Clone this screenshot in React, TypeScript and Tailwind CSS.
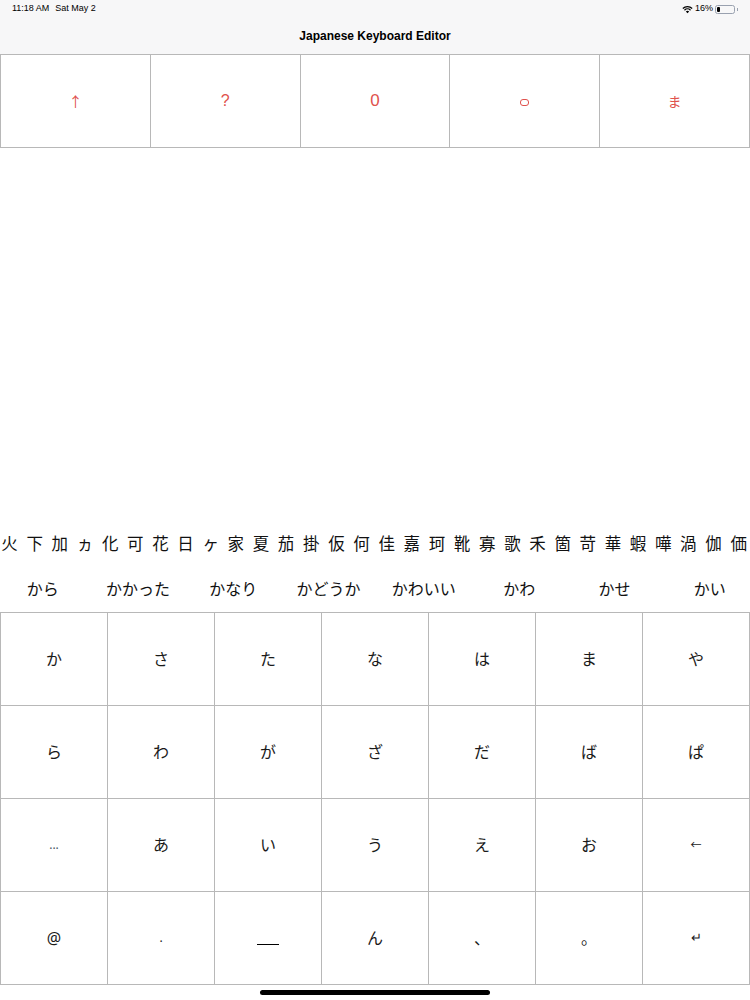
import React from "react";

const kanji = [
  "火", "下", "加", "ヵ", "化", "可", "花", "日", "ヶ", "家",
  "夏", "茄", "掛", "仮", "何", "佳", "嘉", "珂", "靴", "寡",
  "歌", "禾", "箇", "苛", "華", "蝦", "嘩", "渦", "伽", "価",
];

const candidates = ["から", "かかった", "かなり", "かどうか", "かわいい", "かわ", "かせ", "かい"];

const keys = [
  ["か", "さ", "た", "な", "は", "ま", "や"],
  ["ら", "わ", "が", "ざ", "だ", "ば", "ぱ"],
  ["…", "あ", "い", "う", "え", "お", "←"],
  ["@", ".", "__", "ん", "、", "。", "↵"],
];

const topKeys = ["↑", "?", "O", "o", "ま"];

const jp = { fontFamily: '"Noto Sans", "Noto Sans CJK JP", sans-serif' };

function Key({ label }: { label: string }) {
  let content: React.ReactNode = label;
  if (label === "__") {
    content = <span className="block w-[22px] h-px bg-black mt-3" />;
  } else if (label === "…") {
    content = <span className="text-[12px] text-gray-600">...</span>;
  } else if (label === ".") {
    content = <span className="text-[12px]">.</span>;
  } else if (label === "←") {
    content = <span className="text-[11px]">{label}</span>;
  } else if (label === "↵") {
    content = <span className="text-[13px]">{label}</span>;
  }
  return (
    <div className="flex items-center justify-center bg-white text-[16px] text-[#1a1a1a]">
      {content}
    </div>
  );
}

export default function App() {
  return (
    <div className="h-[1000px] w-[750px] flex flex-col bg-white overflow-hidden" style={jp}>
      {/* Status + nav bar */}
      <div className="h-[54px] bg-[#f7f7f8] flex flex-col" style={{ fontFamily: '"Liberation Sans", sans-serif' }}>
        <div className="h-[18px] flex items-center justify-between px-[12px] text-[9px] text-black">
          <div className="flex gap-[6px]">
            <span>11:18 AM</span>
            <span>Sat May 2</span>
          </div>
          <div className="flex items-center gap-[2px]">
            <svg width="11" height="9" viewBox="0 0 16 12">
              <path d="M8 11.5 L5.6 9 A3.4 3.4 0 0 1 10.4 9 Z" fill="black" />
              <path d="M3.6 7 A6.3 6.3 0 0 1 12.4 7" stroke="black" strokeWidth="1.8" fill="none" />
              <path d="M1.2 4.6 A9.8 9.8 0 0 1 14.8 4.6" stroke="black" strokeWidth="1.8" fill="none" />
            </svg>
            <span>16%</span>
            <div className="w-[20px] h-[9px] rounded-[2.5px] border border-gray-400 p-[1px] flex">
              <div className="w-[3px] h-full bg-black rounded-[1px]" />
            </div>
            <div className="w-[1px] h-[3px] bg-gray-400" />
          </div>
        </div>
        <div className="flex-1 flex items-center justify-center text-[12px] font-semibold text-black">
          Japanese Keyboard Editor
        </div>
      </div>

      {/* Top preview keys */}
      <div className="h-[94px] grid grid-cols-5 gap-px bg-[#b8b8b8] border-y border-[#b8b8b8] border-x">
        {topKeys.map((k, i) => (
          <div key={i} className="bg-white flex items-center justify-center text-[#e0524d]">
            {k === "O" ? (
              <span className="text-[17px]" style={{ fontFamily: '"Liberation Sans", sans-serif' }}>0</span>
            ) : k === "o" ? (
              <span className="block w-[9px] h-[7px] rounded-[3px] border-[1.5px] border-[#e0524d] mt-[3px]" />
            ) : k === "?" ? (
              <span className="text-[16px]" style={{ fontFamily: '"Liberation Sans", sans-serif' }}>?</span>
            ) : (
              <span className="text-[14px]">{k}</span>
            )}
          </div>
        ))}
      </div>

      <div className="flex-1" />

      {/* Kanji strip */}
      <div className="h-[43px] overflow-hidden flex items-center">
        <div className="flex -ml-[3px] shrink-0">
          {kanji.map((c, i) => (
            <span key={i} className="w-[25.15px] shrink-0 text-center text-[16.5px] text-[#111]">
              {c}
            </span>
          ))}
        </div>
      </div>

      {/* Candidates */}
      <div className="h-[46px] overflow-hidden flex items-center">
        <div className="flex -ml-[5px] shrink-0">
          {candidates.map((c, i) => (
            <span key={i} className="w-[95.3px] shrink-0 text-center text-[16px] text-[#111]">
              {c}
            </span>
          ))}
        </div>
      </div>

      {/* Keyboard grid */}
      <div className="h-[373px] grid grid-cols-7 grid-rows-4 gap-px bg-[#b8b8b8] border border-[#b8b8b8]">
        {keys.flat().map((k, i) => (
          <Key key={i} label={k} />
        ))}
      </div>

      <div className="flex-1 min-h-[15px] max-h-[15px] flex items-start justify-center pt-[5px]">
        <div className="w-[230px] h-[5px] rounded-full bg-black" />
      </div>
    </div>
  );
}
